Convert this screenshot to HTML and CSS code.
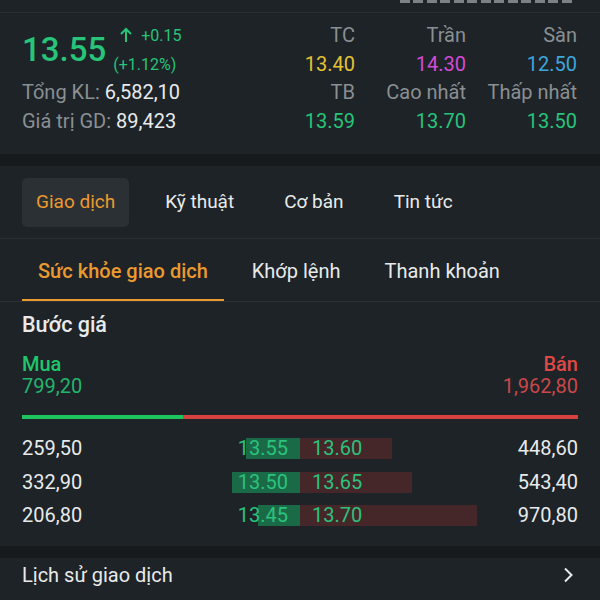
FILE: index.html
```html
<!DOCTYPE html>
<html lang="vi">
<head>
    <meta charset="UTF-8">
    <meta name="viewport" content="width=device-width, initial-scale=1.0">
    <title>Giao dịch</title>
    <link rel="stylesheet" href="styles.css">
</head>
<body>
    <div class="topbar">
        <div class="dashes"></div>
    </div>

    <!-- Price summary -->
    <section class="quote">
        <div class="quote-left">
            <div class="price-row">
                <span class="price">13.55</span>
                <div class="change">
                    <div class="change-line">
                        <svg class="arrow" width="12" height="16" viewBox="0 0 12 16">
                            <path d="M6 15V2M1 7l5-5 5 5" fill="none" stroke="#27c47a" stroke-width="2"/>
                        </svg>
                        <span>+0.15</span>
                    </div>
                    <div class="change-line">(+1.12%)</div>
                </div>
            </div>
            <div class="stat"><span class="muted">Tổng KL:</span> 6,582,10</div>
            <div class="stat"><span class="muted">Giá trị GD:</span> 89,423</div>
        </div>
        <div class="quote-grid">
            <span class="muted">TC</span>
            <span class="muted">Trần</span>
            <span class="muted">Sàn</span>
            <span class="yellow">13.40</span>
            <span class="purple">14.30</span>
            <span class="blue">12.50</span>
            <span class="muted">TB</span>
            <span class="muted">Cao nhất</span>
            <span class="muted">Thấp nhất</span>
            <span class="green">13.59</span>
            <span class="green">13.70</span>
            <span class="green">13.50</span>
        </div>
    </section>

    <div class="band"></div>

    <nav class="tabs">
        <a href="#" class="tab active">Giao dịch</a>
        <a href="#" class="tab">Kỹ thuật</a>
        <a href="#" class="tab">Cơ bản</a>
        <a href="#" class="tab">Tin tức</a>
    </nav>

    <nav class="subtabs">
        <a href="#" class="subtab active">Sức khỏe giao dịch</a>
        <a href="#" class="subtab">Khớp lệnh</a>
        <a href="#" class="subtab">Thanh khoản</a>
    </nav>

    <section class="content">
        <h3 class="section-title">Bước giá</h3>
        <div class="side-row labels">
            <span class="buy">Mua</span>
            <span class="sell">Bán</span>
        </div>
        <div class="side-row totals">
            <span class="buy-soft">799,20</span>
            <span class="sell-soft">1,962,80</span>
        </div>
        <div class="ratio">
            <div class="ratio-buy" style="width: 29%"></div>
            <div class="ratio-sell"></div>
        </div>

        <div class="book">
            <div class="book-row">
                <div class="half">
                    <span class="vol">259,50</span>
                    <span class="bid" style="background-size: 54px 100%">13.55</span>
                </div>
                <div class="half">
                    <span class="ask" style="background-size: 92px 100%">13.60</span>
                    <span class="vol">448,60</span>
                </div>
            </div>
            <div class="book-row">
                <div class="half">
                    <span class="vol">332,90</span>
                    <span class="bid" style="background-size: 68px 100%">13.50</span>
                </div>
                <div class="half">
                    <span class="ask" style="background-size: 112px 100%">13.65</span>
                    <span class="vol">543,40</span>
                </div>
            </div>
            <div class="book-row">
                <div class="half">
                    <span class="vol">206,80</span>
                    <span class="bid" style="background-size: 42px 100%">13.45</span>
                </div>
                <div class="half">
                    <span class="ask" style="background-size: 177px 100%">13.70</span>
                    <span class="vol">970,80</span>
                </div>
            </div>
        </div>
    </section>

    <div class="band"></div>

    <a href="#" class="history">
        <span>Lịch sử giao dịch</span>
        <svg width="12" height="16" viewBox="0 0 12 16">
            <path d="M3 1.5l6.5 6.5-6.5 6.5" fill="none" stroke="#e8eaeb" stroke-width="2"/>
        </svg>
    </a>
</body>
</html>
```

FILE: styles.css
```css
* {
    margin: 0;
    padding: 0;
    box-sizing: border-box;
}

body {
    font-family: Roboto, 'Noto Sans', sans-serif;
    background: #1d2327;
    color: #e8eaeb;
    font-size: 20px;
}

a {
    color: inherit;
    text-decoration: none;
}

.muted {
    color: #8a8f93;
}

.yellow { color: #e3c234; }
.purple { color: #d34bd6; }
.blue { color: #3ea6dc; }
.green { color: #27c47a; }

/* Top strip */
.topbar {
    height: 13px;
    border-bottom: 1px solid #2a3034;
    display: flex;
    justify-content: flex-end;
    padding-right: 28px;
}

.dashes {
    width: 172px;
    height: 3px;
    background: repeating-linear-gradient(to right, #7c8185 0 10px, transparent 10px 13.5px);
}

/* Quote */
.quote {
    display: flex;
    justify-content: space-between;
    padding: 8px 23px 19px 22px;
}

.price-row {
    display: flex;
    align-items: center;
    height: 57px;
}

.price {
    font-size: 33px;
    font-weight: 500;
    color: #27c47a;
    margin-right: 7px;
}

.change {
    color: #27c47a;
    font-size: 16px;
    line-height: 29px;
}

.change-line {
    display: flex;
    align-items: center;
}

.arrow {
    margin-left: 7px;
    margin-right: 9px;
}

.stat {
    line-height: 28.5px;
}

.quote-grid {
    display: grid;
    grid-template-columns: repeat(3, 111px);
    text-align: right;
    line-height: 28.5px;
}

.band {
    height: 12px;
    background: #161a1d;
}

/* Tabs */
.tabs {
    display: flex;
    gap: 22px;
    padding: 12px 22px 11px;
    border-bottom: 1px solid #2a3034;
    font-size: 19px;
}

.tab {
    height: 49px;
    line-height: 48px;
    padding: 0 14px;
    border-radius: 5px;
}

.tab.active {
    background: #2b3034;
    color: #eb9a2f;
}

.subtabs {
    display: flex;
    gap: 12px;
    padding: 0 22px;
    border-bottom: 1px solid #2a3034;
}

.subtab {
    padding: 17px 16px 13px;
    line-height: 30px;
    border-bottom: 2px solid transparent;
}

.subtab.active {
    color: #eb9a2f;
    font-weight: 500;
    border-bottom-color: #eb9a2f;
}

/* Price steps */
.content {
    padding: 9px 22px 20px;
}

.section-title {
    font-size: 21.5px;
    font-weight: 500;
    line-height: 28px;
}

.side-row {
    display: flex;
    justify-content: space-between;
    line-height: 22px;
}

.labels {
    margin-top: 14px;
    font-weight: 500;
}

.buy { color: #1fc66a; }
.sell { color: #df4844; }
.buy-soft { color: #22b56d; }
.sell-soft { color: #c9484a; }

.ratio {
    display: flex;
    height: 4px;
    margin-top: 18px;
}

.ratio-buy {
    background: #1ec55f;
}

.ratio-sell {
    flex: 1;
    background: #d4413f;
}

.book {
    display: flex;
    flex-direction: column;
    gap: 12.5px;
    margin-top: 19px;
}

.book-row {
    display: grid;
    grid-template-columns: 1fr 1fr;
    line-height: 21px;
}

.half {
    display: flex;
    justify-content: space-between;
}

.bid,
.ask {
    color: #2cc27c;
    background-image: linear-gradient(#1a6a47, #1a6a47);
    background-repeat: no-repeat;
}

.bid {
    width: 72px;
    text-align: right;
    padding-right: 12px;
    background-position: right top;
}

.ask {
    width: 180px;
    padding-left: 12px;
    background-image: linear-gradient(#45272a, #45272a);
    background-position: left top;
}

/* History link */
.history {
    display: flex;
    justify-content: space-between;
    align-items: center;
    padding: 3px 26px 12px 22px;
    line-height: 28px;
}
```
